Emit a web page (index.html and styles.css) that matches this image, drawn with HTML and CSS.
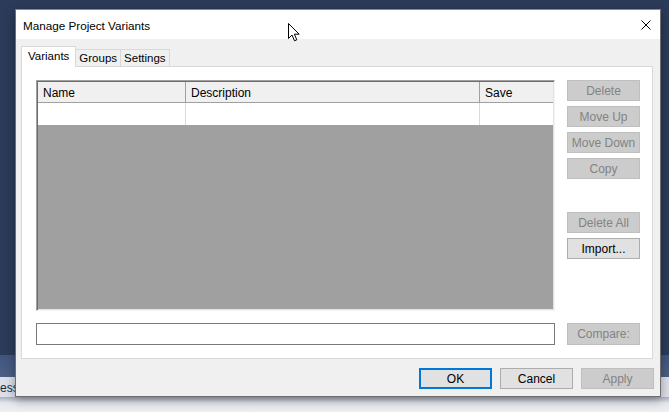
FILE: index.html
```html
<!DOCTYPE html>
<html lang="en">
<head>
    <meta charset="UTF-8">
    <title>Manage Project Variants</title>
    <link rel="stylesheet" href="styles.css">
</head>
<body>
<div class="desktop">
    <div class="wall"></div>
    <div class="band"></div>
    <div class="strip"><span class="strip-text">ess</span></div>
    <div class="floor"></div>

    <div class="window">
        <div class="titlebar">
            <span class="title">Manage Project Variants</span>
            <span class="close">
                <svg width="10" height="10" viewBox="0 0 10 10">
                    <path d="M0.5 0.5 L9.5 9.5 M9.5 0.5 L0.5 9.5" stroke="#000" stroke-width="1" fill="none"/>
                </svg>
            </span>
        </div>
        <div class="dialog-body">
            <div class="tabs">
                <div class="tab tab--active">Variants</div>
                <div class="tab">Groups</div>
                <div class="tab">Settings</div>
            </div>
            <div class="panel">
                <div class="panel-main">
                    <div class="list">
                        <div class="list-row list-row--head">
                            <div class="col col-name">Name</div>
                            <div class="col col-desc">Description</div>
                            <div class="col col-save">Save</div>
                        </div>
                        <div class="list-row">
                            <div class="col col-name"></div>
                            <div class="col col-desc"></div>
                            <div class="col col-save"></div>
                        </div>
                        <div class="list-empty"></div>
                    </div>
                    <div class="side-buttons">
                        <button class="btn" disabled>Delete</button>
                        <button class="btn" disabled>Move Up</button>
                        <button class="btn" disabled>Move Down</button>
                        <button class="btn" disabled>Copy</button>
                        <button class="btn btn--spaced" disabled>Delete All</button>
                        <button class="btn">Import...</button>
                    </div>
                </div>
                <div class="compare-row">
                    <input class="compare-input" type="text">
                    <button class="btn" disabled>Compare:</button>
                </div>
            </div>
            <div class="footer">
                <button class="btn btn--default">OK</button>
                <button class="btn">Cancel</button>
                <button class="btn" disabled>Apply</button>
            </div>
        </div>
    </div>

    <svg class="cursor" width="13" height="19" viewBox="0 0 13 19">
        <path d="M0.5 0.5 L0.5 15.5 L4 12 L6.5 17.8 L8.8 16.8 L6.4 11.2 L11.2 11.2 Z" fill="#fff" stroke="#000" stroke-width="1" stroke-linejoin="miter"/>
    </svg>
</div>
</body>
</html>
```

FILE: styles.css
```css
body{
    margin: 0;
    font-family: "Liberation Sans", Arial, sans-serif;
    font-size: 12px;
    color: #000;
}
.desktop{
    position: relative;
    width: 669px;
    height: 412px;
    display: flex;
    flex-direction: column;
    overflow: hidden;
}
.wall{
    height: 355px;
    background: #2c3b59;
}
.band{
    height: 22px;
    background: linear-gradient(#42557d, #4d5f86);
}
.strip{
    height: 20px;
    background: #dde0e9;
    display: flex;
    align-items: flex-end;
}
.strip-text{
    margin-left: 0;
    margin-bottom: 2px;
    color: #1e2a44;
}
.floor{
    flex: 1;
    background: linear-gradient(#a7aec2, #e6e7ec 6px, #efefef);
}

/* the dialog window */
.window{
    position: absolute;
    left: 15px;
    top: 9px;
    width: 646px;
    height: 388px;
    box-sizing: border-box;
    border: 1px solid #6e6e6e;
    border-top-color: #8a8a8a;
    background: #f0f0f0;
    display: flex;
    flex-direction: column;
    box-shadow: 0 3px 10px rgba(0, 0, 0, 0.35);
}
.titlebar{
    height: 29px;
    background: #fff;
    display: flex;
    align-items: center;
    justify-content: space-between;
    padding: 0 9px 0 7px;
}
.title{
    padding-top: 1px;
    font-size: 11.7px;
}
.close{
    display: flex;
    margin-top: 1px;
}

.dialog-body{
    flex: 1;
    display: flex;
    flex-direction: column;
    padding: 7px 6px 0 5px;
}

.tabs{
    display: flex;
    align-items: flex-end;
    height: 21px;
    position: relative;
    z-index: 1;
    margin-bottom: -1px;
}
.tab{
    height: 17px;
    box-sizing: border-box;
    border: 1px solid #d9d9d9;
    border-bottom: none;
    background: #f0f0f0;
    padding: 0 3px;
    display: flex;
    align-items: center;
    margin-left: -1px;
    margin-bottom: 1px;
    font-size: 11.5px;
}
.tab:first-child{
    margin-left: 0;
}
.tab--active{
    height: 21px;
    background: #fff;
    padding: 0 6px 2px 6px;
    margin-bottom: 0;
    position: relative;
    z-index: 1;
}

.panel{
    width: 632px;
    height: 293px;
    box-sizing: border-box;
    border: 1px solid #d9d9d9;
    background: #fff;
    padding: 13px 12px 13px 14px;
    display: flex;
    flex-direction: column;
    gap: 12px;
}
.panel-main{
    flex: 1;
    display: flex;
    gap: 12px;
}

.list{
    flex: 1;
    display: flex;
    flex-direction: column;
    border: 1px solid #a0a0a0;
    border-right-color: #f4f4f4;
    border-bottom-color: #f4f4f4;
    box-shadow: inset 1px 1px 0 #6d6d6d, inset -1px -1px 0 #e3e3e3;
    padding: 1px 1px 1px 1px;
    background: #a0a0a0;
}
.list-row{
    display: flex;
    height: 22px;
    background: #fff;
}
.list-row--head{
    height: 20px;
    background: #f0f0f0;
    border-bottom: 1px solid #a0a0a0;
    box-sizing: content-box;
}
.col{
    box-sizing: border-box;
    border-right: 1px solid #dadada;
    display: flex;
    align-items: center;
    padding-left: 5px;
}
.list-row--head .col{
    border-right-color: #a0a0a0;
    padding-top: 1px;
}
.col-name{
    width: 148px;
}
.col-desc{
    width: 294px;
}
.col-save{
    flex: 1;
    border-right: none;
}
.list-row--head .col-save{
    border-right: none;
}
.list-empty{
    flex: 1;
    background: #a0a0a0;
}

.side-buttons{
    width: 73px;
    display: flex;
    flex-direction: column;
    gap: 5px;
}
.btn{
    font-family: inherit;
    font-size: 12px;
    height: 21px;
    width: 73px;
    padding: 0;
    margin: 0;
    background: #e1e1e1;
    border: 1px solid #adadad;
    color: #000;
}
.btn:disabled{
    background: #cccccc;
    border-color: #bfbfbf;
    color: #838383;
}
.btn--spaced{
    margin-top: 28px;
}
.btn--default{
    border: 2px solid #0078d7;
}

.compare-row{
    display: flex;
    gap: 12px;
    height: 22px;
}
.compare-input{
    flex: 1;
    margin: 0;
    box-sizing: border-box;
    height: 22px;
    border: 1px solid #7a7a7a;
    background: #fff;
}
.compare-row .btn{
    height: 22px;
}

.footer{
    display: flex;
    justify-content: flex-end;
    gap: 8px;
    margin-top: 9px;
}

.cursor{
    position: absolute;
    left: 288px;
    top: 23px;
}
```
